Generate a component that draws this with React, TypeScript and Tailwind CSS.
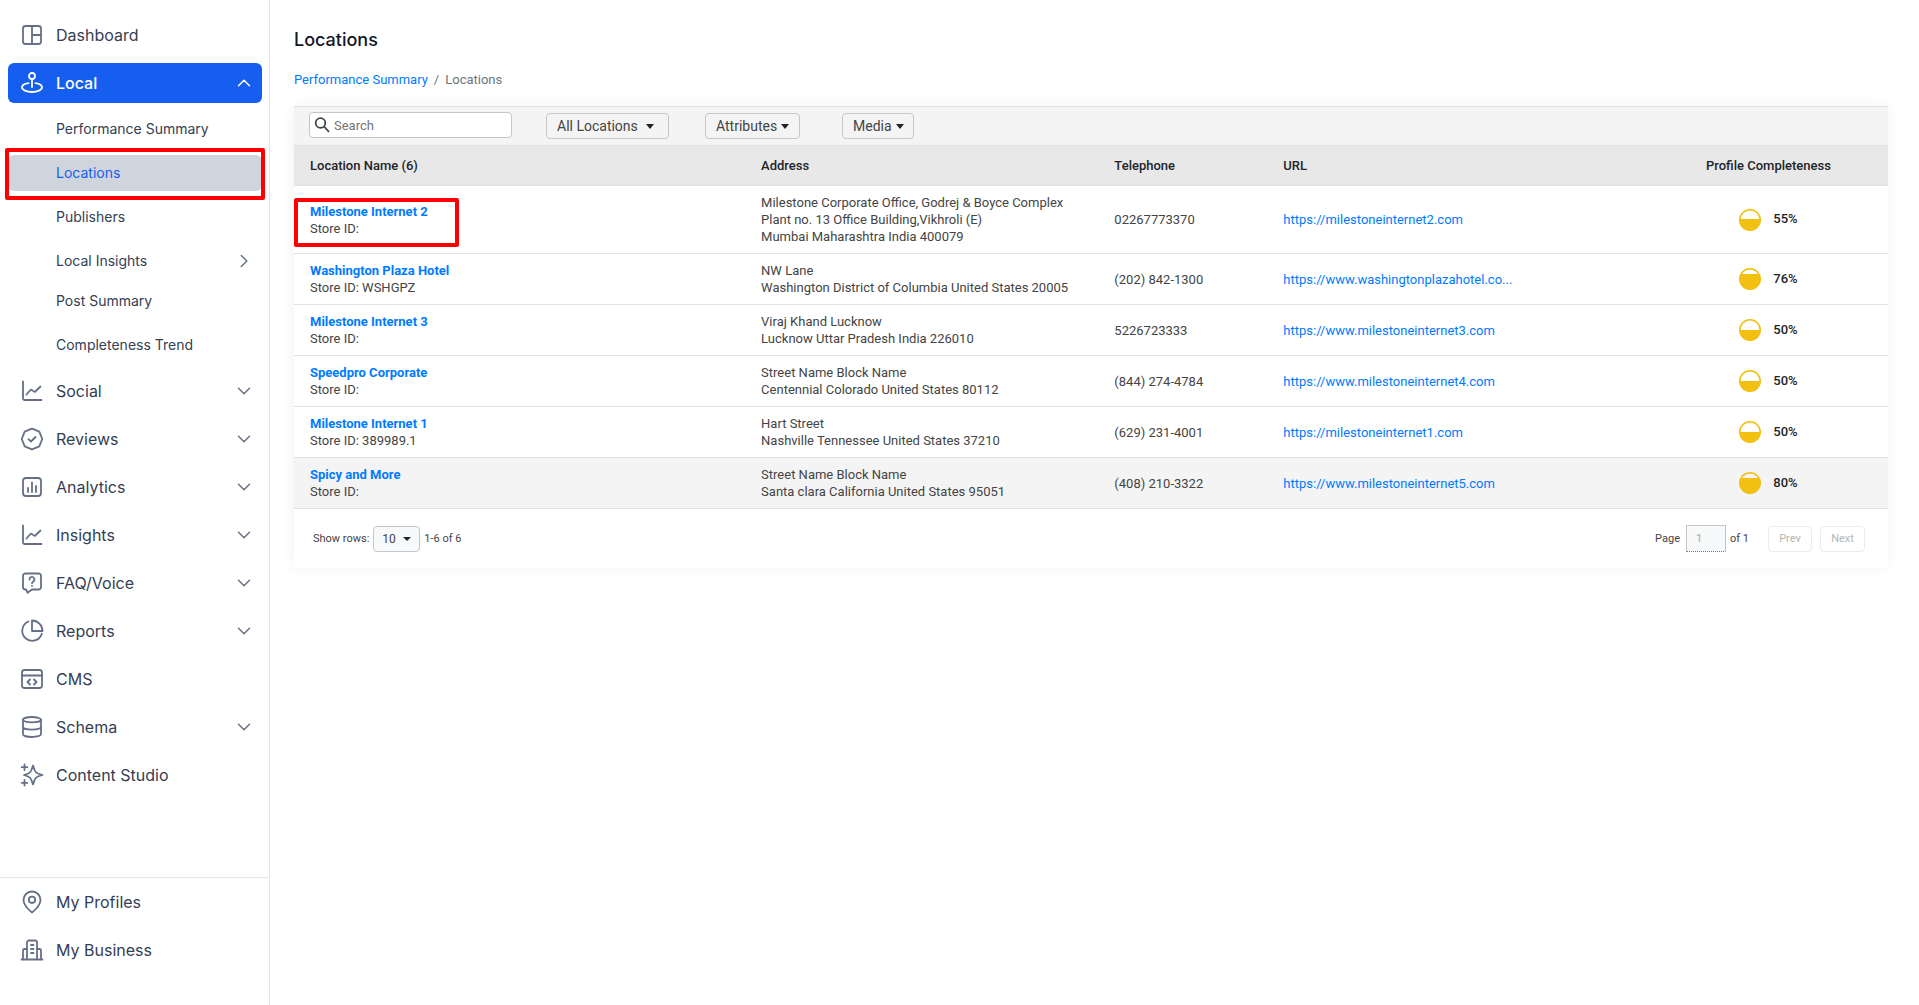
import { ReactNode, useState } from "react";
import clsx from "clsx";

interface ILocation {
  name: string;
  storeId: string;
  address: string[];
  phone: string;
  url: string;
  percent: number;
}

const locations: ILocation[] = [
  {
    name: "Milestone Internet 2",
    storeId: "",
    address: ["Milestone Corporate Office, Godrej & Boyce Complex", "Plant no. 13 Office Building,Vikhroli (E)", "Mumbai Maharashtra India 400079"],
    phone: "02267773370",
    url: "https://milestoneinternet2.com",
    percent: 55,
  },
  {
    name: "Washington Plaza Hotel",
    storeId: "WSHGPZ",
    address: ["NW Lane", "Washington District of Columbia United States 20005"],
    phone: "(202) 842-1300",
    url: "https://www.washingtonplazahotel.co...",
    percent: 76,
  },
  {
    name: "Milestone Internet 3",
    storeId: "",
    address: ["Viraj Khand Lucknow", "Lucknow Uttar Pradesh India 226010"],
    phone: "5226723333",
    url: "https://www.milestoneinternet3.com",
    percent: 50,
  },
  {
    name: "Speedpro Corporate",
    storeId: "",
    address: ["Street Name Block Name", "Centennial Colorado United States 80112"],
    phone: "(844) 274-4784",
    url: "https://www.milestoneinternet4.com",
    percent: 50,
  },
  {
    name: "Milestone Internet 1",
    storeId: "389989.1",
    address: ["Hart Street", "Nashville Tennessee United States 37210"],
    phone: "(629) 231-4001",
    url: "https://milestoneinternet1.com",
    percent: 50,
  },
  {
    name: "Spicy and More",
    storeId: "",
    address: ["Street Name Block Name", "Santa clara California United States 95051"],
    phone: "(408) 210-3322",
    url: "https://www.milestoneinternet5.com",
    percent: 80,
  },
];

const Icon = ({ children }: { children: ReactNode }) => (
  <svg
    className="w-6 h-6 shrink-0"
    viewBox="0 0 24 24"
    fill="none"
    stroke="currentColor"
    strokeWidth="1.8"
    strokeLinecap="round"
    strokeLinejoin="round"
    aria-hidden="true"
  >
    {children}
  </svg>
);

const icons = {
  dashboard: (
    <Icon>
      <rect x="3" y="3" width="18" height="18" rx="2.5" />
      <path d="M12 3v18M12 12h9" />
    </Icon>
  ),
  local: (
    <Icon>
      <circle cx="12" cy="5" r="3" />
      <path d="M12 8v8M8.5 12.2C4.500 12.800 2 14.300 2 16.300 2 19 6.500 21 12 21s10-2 10-4.700c0-2-2.500-3.500-6.500-4.100" />
    </Icon>
  ),
  chart: (
    <Icon>
      <path d="M3 2.500V19.500a1.500 1.500 0 0 0 1.500 1.500H21.500M6.500 15.500l4-4.500a1 1 0 0 1 1.300-.1l2.200 1.700a1 1 0 0 0 1.300-.1L20.500 7.500" />
    </Icon>
  ),
  reviews: (
    <Icon>
      <path d="M12 1.700l3.700 1.500 3.600 1.500 1.500 3.600L22.300 12l-1.500 3.700-1.500 3.600-3.600 1.500L12 22.300l-3.700-1.500-3.600-1.500-1.500-3.600L1.700 12l1.500-3.700 1.500-3.600 3.600-1.500z" />
      <path d="M8.500 12.200l2.500 2.300 4.500-4.500" />
    </Icon>
  ),
  analytics: (
    <Icon>
      <rect x="3" y="3" width="18" height="18" rx="3" />
      <path d="M8 13v4M12 7.500V17M16 11v6" />
    </Icon>
  ),
  faq: (
    <Icon>
      <path d="M6 18.500H5.500a2.500 2.500 0 0 1-2.500-2.500V5a2.500 2.500 0 0 1 2.500-2.500h13A2.500 2.500 0 0 1 21 5v11a2.500 2.500 0 0 1-2.500 2.500H12L7.500 21.700z" />
      <path d="M9.500 8.500a2.500 2.500 0 1 1 3.900 2c-.9.600-1.400 1-1.400 1.800M12 14.800v.2" />
    </Icon>
  ),
  reports: (
    <Icon>
      <path d="M8.500 2.500A10 10 0 1 0 21.900 14.500" />
      <path d="M12 1.500V12h10.500A10.500 10.500 0 0 0 12 1.500z" />
    </Icon>
  ),
  cms: (
    <Icon>
      <rect x="2" y="3" width="20" height="18" rx="2.500" />
      <path d="M2 8.500h20M10 12.500L7.500 15l2.500 2.500M14 12.500l2.500 2.500-2.500 2.500" />
    </Icon>
  ),
  schema: (
    <Icon>
      <ellipse cx="12" cy="4.700" rx="9" ry="2.700" />
      <path d="M3 4.700v14.600C3 20.800 7 22 12 22s9-1.200 9-2.700V4.700M3 12c0 1.500 4 2.700 9 2.700s9-1.200 9-2.700" />
    </Icon>
  ),
  studio: (
    <Icon>
      <path d="M13 2.500l1.800 5a6 6 0 0 0 3 3l4.700 1.500-4.700 1.500a6 6 0 0 0-3 3L13 21.500l-1.800-5a6 6 0 0 0-3-3L4 12l4.200-1.500a6 6 0 0 0 3-3z" />
      <path d="M4.500 1.500v5.500M1.700 4.200h5.600M4.500 17v5.500M1.700 19.800h5.600" />
    </Icon>
  ),
  profiles: (
    <Icon>
      <path d="M12 22.500c0 0 8.500-6.500 8.500-12.500a8.500 8.500 0 0 0-17 0c0 6 8.500 12.500 8.500 12.500z" />
      <circle cx="12" cy="9.800" r="3.200" />
    </Icon>
  ),
  business: (
    <Icon>
      <path d="M1.500 21.500h21M7 21.500V4.500a2 2 0 0 1 2-2h6a2 2 0 0 1 2 2v17M7 11H4.500a1.500 1.500 0 0 0-1.500 1.500v9M17 11h2.500a1.500 1.500 0 0 1 1.500 1.500v9M11 7h2.500M11 11h2.500M11 15h2.500" />
    </Icon>
  ),
};

const Chevron = ({ dir }: { dir: "up" | "down" | "right" }) => (
  <svg
    className={clsx("w-4 h-4 shrink-0 mr-[10px]", { "rotate-180": dir === "up", "-rotate-90": dir === "right" })}
    viewBox="0 0 16 16"
    fill="none"
    stroke="currentColor"
    strokeWidth="1.5"
    strokeLinecap="round"
    strokeLinejoin="round"
    aria-hidden="true"
  >
    <path d="M2.500 5.300L8 10.800l5.500-5.500" />
  </svg>
);

const menu = [
  { label: "Social", icon: icons.chart, open: true },
  { label: "Reviews", icon: icons.reviews, open: true },
  { label: "Analytics", icon: icons.analytics, open: true },
  { label: "Insights", icon: icons.chart, open: true },
  { label: "FAQ/Voice", icon: icons.faq, open: true },
  { label: "Reports", icon: icons.reports, open: true },
  { label: "CMS", icon: icons.cms, open: false },
  { label: "Schema", icon: icons.schema, open: true },
  { label: "Content Studio", icon: icons.studio, open: false },
];

const NavItem = ({ label, icon, arrow, active }: { label: string; icon: ReactNode; arrow?: "up" | "down"; active?: boolean }) => (
  <a
    href="#"
    className={clsx("flex items-center h-10 pl-3 rounded-md text-base", {
      "bg-[#155eef] text-white font-medium": active,
      "text-[#344054]": !active,
    })}
  >
    <span className={clsx("mr-3", active ? "text-white" : "text-[#667085]")}>{icon}</span>
    <span className="flex-1">{label}</span>
    {arrow && (
      <span className={active ? "text-white" : "text-[#667085]"}>
        <Chevron dir={arrow} />
      </span>
    )}
  </a>
);

const SubItem = ({ label }: { label: string }) => (
  <a href="#" className="flex items-center h-9 pl-12 rounded-md text-sm text-[#344054]">
    {label}
  </a>
);

const Sidebar = () => (
  <aside className="flex flex-col shrink-0 w-[270px] min-h-screen border-r border-[#e4e7ec] font-['Inter',sans-serif]">
    <nav className="flex flex-col gap-2 pl-2 pr-[7px] pt-[15px]">
      <NavItem label="Dashboard" icon={icons.dashboard} />
      <NavItem label="Local" icon={icons.local} arrow="up" active />
      <SubItem label="Performance Summary" />
      <div className="relative">
        <a href="#" className="flex items-center h-9 pl-12 rounded-md text-sm text-[#155eef] bg-[#d0d5dd]">
          Locations
        </a>
        <div className="absolute -inset-x-[3px] -top-[7px] -bottom-[9px] border-4 border-[#ff0000] rounded-xs pointer-events-none" />
      </div>
      <SubItem label="Publishers" />
      <div className="flex flex-col gap-1">
        <a href="#" className="flex items-center h-9 pl-12 rounded-md text-sm text-[#344054]">
          <span className="flex-1">Local Insights</span>
          <span className="text-[#667085]">
            <Chevron dir="right" />
          </span>
        </a>
        <SubItem label="Post Summary" />
      </div>
      <SubItem label="Completeness Trend" />
      {menu.map((item) => (
        <NavItem key={item.label} label={item.label} icon={item.icon} arrow={item.open ? "down" : undefined} />
      ))}
    </nav>
    <nav className="flex flex-col gap-2 pl-2 pr-[7px] pt-1 pb-[35px] mt-auto border-t border-[#e4e7ec]">
      <NavItem label="My Profiles" icon={icons.profiles} />
      <NavItem label="My Business" icon={icons.business} />
    </nav>
  </aside>
);

const Caret = () => <span className="border-x-4 border-t-5 border-x-transparent border-t-[#212529]" />;

const FilterButton = ({ label, className }: { label: string; className?: string }) => (
  <button className={clsx("flex items-center h-[26px] pl-[10px] rounded-sm border border-[#c6c6c6] text-sm text-[#444]", className)}>
    {label}
    <Caret />
  </button>
);

const Gauge = ({ percent }: { percent: number }) => {
  const top = percent > 70 ? 6 : 10;
  return (
    <svg className="w-[22px] h-[22px]" viewBox="0 0 22 22" aria-hidden="true">
      <clipPath id={`level-${percent}`}>
        <rect x="0" y={percent === 50 ? 11 : top} width="22" height="22" />
      </clipPath>
      <circle cx="11" cy="11" r="10.200" fill="none" stroke="#f2c010" strokeWidth="1.600" />
      <circle cx="11" cy="11" r="10.500" fill="#f2c010" clipPath={`url(#level-${percent})`} />
    </svg>
  );
};

const App = () => {
  const [search, setSearch] = useState<string>("");
  const [page, setPage] = useState<string>("1");

  return (
    <div className="flex min-h-screen bg-white font-['Roboto',sans-serif] text-[13px] leading-[17px] text-[#444]">
      <Sidebar />
      <main className="flex-1 min-w-0 pl-6 pr-[31px] pt-7">
        <h1 className="text-lg leading-6 font-medium text-[#101828] font-['Inter',sans-serif]">Locations</h1>
        <nav className="flex gap-[6px] mt-[19px] text-[#6c757d]">
          <a href="#" className="text-[#007bff]">Performance Summary</a>
          <span>/</span>
          <span>Locations</span>
        </nav>

        <section className="mt-[18px] rounded-md shadow-[0_0_15px_rgba(0,0,0,0.06)]">
          <div className="flex items-center h-[39px] pl-[15px] border-t border-[#dee2e6] bg-[#f4f4f4]">
            <label className="flex items-center w-[203px] h-[26px] mb-0.5 pl-1 gap-1 rounded-sm border border-[#c6c6c6] bg-white">
              <svg className="w-4 h-4 shrink-0" viewBox="0 0 16 16" fill="none" stroke="#444" strokeWidth="1.800" aria-hidden="true">
                <circle cx="6.500" cy="6" r="4.800" />
                <path d="M10 9.500l5 5.300" />
              </svg>
              <input
                aria-label="Search"
                value={search}
                onChange={(e) => setSearch(e.target.value)}
                placeholder="Search"
                type="text"
                className="w-full outline-none placeholder:text-[#757575]"
              />
            </label>
            <FilterButton label="All Locations" className="gap-2 w-[123px] ml-[34px]" />
            <FilterButton label="Attributes" className="gap-1 w-[95px] ml-9" />
            <FilterButton label="Media" className="gap-1 w-[72px] ml-[42px]" />
          </div>

          <table className="w-full table-fixed border-collapse text-left">
            <colgroup>
              <col className="w-[28.3%]" />
              <col className="w-[22.1%]" />
              <col className="w-[10.6%]" />
              <col className="w-[24%]" />
              <col className="w-[15%]" />
            </colgroup>
            <thead>
              <tr className="h-10 border-y border-[#dee2e6] bg-[#e8e8e8] text-[#212529]">
                <th className="pl-4 font-medium">Location Name (6)</th>
                <th className="pl-4 font-medium">Address</th>
                <th className="pl-[17px] font-medium">Telephone</th>
                <th className="pl-[17px] font-medium">URL</th>
                <th className="font-medium text-center">Profile Completeness</th>
              </tr>
            </thead>
            <tbody>
              {locations.map((loc, index) => (
                <tr key={loc.name} className="border-b border-[#dee2e6] last:bg-[#f4f4f4]">
                  <td className="relative pl-4 py-2">
                    <a href="#" className="font-bold text-[#007bff]">{loc.name}</a>
                    <p>Store ID: {loc.storeId}</p>
                    {index === 0 && (
                      <div className="absolute left-0 top-3 w-[165px] h-[49px] border-4 border-[#ff0000] rounded-xs pointer-events-none" />
                    )}
                  </td>
                  <td className="pl-4 py-2">
                    {loc.address.map((line) => (
                      <p key={line} className="whitespace-nowrap">{line}</p>
                    ))}
                  </td>
                  <td className="pl-[17px]">{loc.phone}</td>
                  <td className="pl-[17px]">
                    <a href="#" className="text-[#007bff]">{loc.url}</a>
                  </td>
                  <td>
                    <div className="flex items-center justify-center gap-3">
                      <Gauge percent={loc.percent} />
                      <span className="pb-0.5 font-medium text-[#212529]">{loc.percent}%</span>
                    </div>
                  </td>
                </tr>
              ))}
            </tbody>
          </table>

          <div className="flex items-center justify-between h-[59px] pl-[19px] pr-[23px] text-[11px]">
            <div className="flex items-center gap-1">
              <label htmlFor="rows">Show rows:</label>
              <div className="relative flex items-center">
                <select id="rows" defaultValue="10" className="appearance-none w-[47px] h-[26px] pl-2 rounded-sm border border-[#c6c6c6] bg-[#f8f9fa] text-xs">
                  <option>10</option>
                  <option>25</option>
                  <option>50</option>
                </select>
                <span className="absolute right-[9px] border-x-4 border-t-4 border-x-transparent border-t-[#212529] pointer-events-none" />
              </div>
              <span>1-6 of 6</span>
            </div>
            <div className="flex items-center">
              <label htmlFor="page">Page</label>
              <input
                id="page"
                value={page}
                onChange={(e) => setPage(e.target.value)}
                type="text"
                className="w-10 h-[27px] ml-[6px] mr-1 pl-[9px] border border-[#c6c6c6] border-b-[#777] [border-bottom-style:dotted] bg-[#f8f9fa] text-[#aaa]"
              />
              <span>of 1</span>
              <button className="w-11 h-[26px] ml-[19px] rounded-sm border border-[#ebebeb] text-[#b4b4b4]">Prev</button>
              <button className="w-[45px] h-[26px] ml-2 rounded-sm border border-[#ebebeb] text-[#b4b4b4]">Next</button>
            </div>
          </div>
        </section>
      </main>
    </div>
  );
};

export default App;
